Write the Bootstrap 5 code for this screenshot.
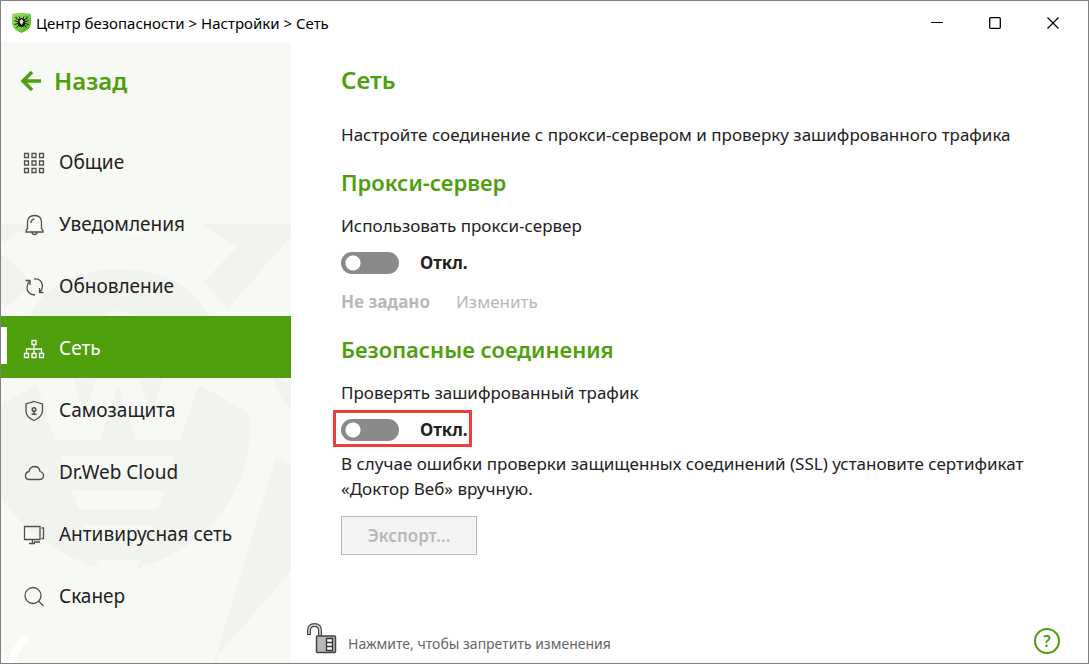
<!DOCTYPE html>
<html lang="ru">
<head>
<meta charset="utf-8">
<meta name="viewport" content="width=device-width, initial-scale=1">
<title>Центр безопасности</title>
<link rel="stylesheet" href="https://cdn.jsdelivr.net/npm/bootstrap@5.3.0/dist/css/bootstrap.min.css">
<style>
  :root { --brand: #4f9f0d; --ink: #222; --muted: #b8b8b8; }
  body { font-family: "Noto Sans", "Open Sans", sans-serif; font-size: 17px; line-height: 25px; color: var(--ink); background: #fff; }
  .app-window { border: 1px solid #808080; }
  .title-bar { height: 41px; padding: 2px 6px 0 10px; font-size: 15px; line-height: 20px; color: #000; }
  .title-bar a { color: inherit; }
  .win-btn { width: 58px; height: 39px; color: #000; }
  .win-btn svg, .side-link svg, .lock-btn svg, .title-bar svg { display: block; flex: none; }
  .side-panel { width: 290px; background: #f7f9f5; overflow: hidden; }
  .watermark { position: absolute; left: 0; top: 0; }
  .back-link { height: 88px; padding: 0 0 11px 20px; gap: 12px; font-size: 24px; font-weight: 600; color: var(--brand); }
  .side-link { height: 62px; padding: 3px 0 0 22px; gap: 14px; font-size: 19px; color: var(--ink); }
  .side-link:hover { color: var(--brand); }
  .side-link.active { background: var(--brand); color: #fff; }
  .side-link.active::before { content: ""; position: absolute; left: 0; top: 11px; width: 6px; height: 37px; background: #fff; }
  .side-link svg { stroke: #505050; fill: none; }
  .side-link.active svg { stroke: #fff; }
  .page-pane { padding: 22px 50px 9px 50px; }
  .page-title { font-size: 24px; line-height: 32px; font-weight: 600; color: var(--brand); margin: 0 0 26px; }
  .section-title { font-size: 22px; line-height: 30px; font-weight: 600; color: var(--brand); margin: 0 0 16px; }
  .lead-text { margin: 0 0 20px; }
  .switch-row { gap: 21px; height: 37px; margin: 6px 0 8px; font-weight: 700; }
  .switch-row .form-check-input { width: 58px; height: 22px; margin: 0; border: 0; border-radius: 11px; box-shadow: none; background-color: #8a8a8a;
    background-image: radial-gradient(circle at 12px 11px, #fff 7px, transparent 8px); background-position: 0 0; background-size: 100% 100%; }
  .switch-row .form-check-input:checked { background-color: var(--brand); background-image: radial-gradient(circle at 46px 11px, #fff 7px, transparent 8px); }
  .marked { width: 139px; margin: 5px 0 4px -8px; padding: 2px 0 0 5px; border: 3px solid #ee3e38; white-space: nowrap; }
  .proxy-state { gap: 26px; margin-bottom: 20px; color: var(--muted); }
  .proxy-state .btn { font-size: 17px; line-height: 25px; border: 0; }
  .proxy-state .btn:disabled { color: var(--muted); opacity: 1; }
  .cert-note { margin: 0 0 15px; }
  .export-btn { width: 136px; height: 39px; padding: 0; font-size: 17px; font-weight: 600; border-radius: 0; }
  .export-btn:disabled { color: var(--muted); background: #f4f4f4; border-color: #b8b8b8; opacity: 1; }
  .foot-bar { margin-left: -35px; margin-right: -22px; }
  .lock-btn { gap: 11px; font-size: 14px; line-height: 20px; color: #666; }
  .help-btn { width: 26px; height: 26px; border: 2px solid var(--brand); border-radius: 50%; color: var(--brand); font-size: 16px; line-height: 22px; font-weight: 600; }
</style>
</head>
<body>
<div class="app-window min-vh-100 d-flex flex-column">
  <header class="title-bar d-flex align-items-center justify-content-between">
    <div class="d-flex align-items-center gap-1">
      <svg width="21" height="22" viewBox="0 0 21 22">
        <defs><linearGradient id="shield" x1="0" y1="0" x2="1" y2="1"><stop offset="0" stop-color="#a2de62"/><stop offset=".5" stop-color="#77cf3f"/><stop offset="1" stop-color="#4fae12"/></linearGradient></defs>
        <path d="M1 2Q10.500 0 20 2V12Q19 18 10.500 21Q2 18 1 12Z" fill="url(#shield)"/>
        <path d="M8 8L5 6.500V4.500M7 10L3.500 8.500M7 11.500L3.500 12.500M8 13L5.500 15.500M13 8L16 6.500V4.500M14 10L17.500 8.500M14 11.500L17.500 12.500M13 13L15.500 15.500M9 6.500L8 4.500M12 6.500L13 4.500" fill="none" stroke="#111" stroke-width="1"/>
        <ellipse cx="10.500" cy="10.500" rx="3.500" ry="4.500" fill="#111"/>
        <path d="M8.500 9L10.500 7L12.500 9L12 11L10.500 13L9 11Z" fill="#d9eaca"/>
      </svg>
      <nav aria-label="Путь"><a class="text-decoration-none" href="#">Центр безопасности</a> &gt; <a class="text-decoration-none" href="#">Настройки</a> &gt; <span>Сеть</span></nav>
    </div>
    <div class="d-flex">
      <button type="button" class="win-btn btn p-0 border-0 d-flex align-items-center justify-content-center" aria-label="Свернуть"><svg width="12" height="12"><path d="M0 5.500H12" stroke="#000"/></svg></button>
      <button type="button" class="win-btn btn p-0 border-0 d-flex align-items-center justify-content-center" aria-label="Развернуть"><svg width="12" height="12"><rect x=".700" y=".700" width="10.600" height="10.600" rx="1" fill="none" stroke="#000" stroke-width="1.300"/></svg></button>
      <button type="button" class="win-btn btn p-0 border-0 d-flex align-items-center justify-content-center" aria-label="Закрыть"><svg width="12" height="12"><path d="M.500.500L11.500 11.500M11.500.500L.500 11.500" stroke="#000" stroke-width="1.200"/></svg></button>
    </div>
  </header>

  <div class="d-flex flex-grow-1">
    <aside class="side-panel position-relative flex-shrink-0">
      <svg class="watermark" width="290" height="621" viewBox="1 42 290 621" aria-hidden="true">
        <g fill="#f1f3ef">
          <path d="M200 224H291V236L228 309L203 282L237 247Z"/>
          <path d="M1 224H33L1 244Z"/>
          <path d="M1 253L33 283L6 309L1 303Z"/>
          <path d="M28 320Q50 269 119 269Q188 269 210 320L138 318L119 310L100 318Z"/>
          <path d="M1 404L37 385L55 440H180L199 385L249 413C256 470 226 541 139 568H100C56 556 18 524 1 497Z"/>
          <path d="M73 376H97L84 418ZM139 376H163L151 418Z"/>
          <path d="M100 440L118 386L136 440Z"/>
          <path d="M272 376L291 384V411Q280 400 272 376Z"/>
          <path d="M276 457L291 465V571L218 655V663H214Z"/>
        </g>
        <path d="M61 456H175L168 474H68ZM72 491H164L158 509H79ZM83 525H153L147 543H89ZM95 560H141L137 569H99Z" fill="#f7f9f5"/>
        <path d="M24 640Q13 650 13 664M0 656L6 664" stroke="#fff" stroke-width="7" stroke-linecap="round" fill="none"/>
      </svg>
      <div class="position-relative">
        <a class="back-link d-flex align-items-center text-decoration-none" href="#"><svg width="21" height="20"><path d="M20 10H3M11 1L2 10L11 19" fill="none" stroke="#4f9f0d" stroke-width="3.500"/></svg>Назад</a>
        <nav class="nav flex-column flex-nowrap">
          <a class="side-link nav-link position-relative d-flex align-items-center" href="#"><svg width="22" height="22"><path d="M1.500 1.500h4v4h-4zM9 1.500h4v4h-4zM16.500 1.500h4v4h-4zM1.500 9h4v4h-4zM9 9h4v4h-4zM16.500 9h4v4h-4zM1.500 16.500h4v4h-4zM9 16.500h4v4h-4zM16.500 16.500h4v4h-4z" stroke-width="1.300"/></svg>Общие</a>
          <a class="side-link nav-link position-relative d-flex align-items-center" href="#"><svg width="22" height="22"><path d="M4.500 14.500V8.500Q4.500 1.500 11.500 1.500Q18.500 1.500 18.500 8.500V14.500L20 16.500V18H3V16.500ZM9 18.500Q9 20.500 11.500 20.500Q14 20.500 14 18.500M8 9Q8 5.500 11.500 5" stroke-width="1.300"/></svg>Уведомления</a>
          <a class="side-link nav-link position-relative d-flex align-items-center" href="#"><svg width="22" height="22"><path d="M11 3Q19 2.500 19.500 10.500Q19.500 13.500 16.500 16.500M20.500 16.500H16.500V12M12 19Q4 18.500 4 11.500Q4 7.500 7 4.500M2.500 4.500H7V9" stroke-width="1.300"/></svg>Обновление</a>
          <a class="side-link nav-link active position-relative d-flex align-items-center" href="#" aria-current="page"><svg width="22" height="22"><path d="M9 2.500h4v4h-4zM1.500 15.500h4v4h-4zM9 15.500h4v4h-4zM16.500 15.500h4v4h-4zM11 6.500V15.500M3.500 15.500V11H18.500V15.500" stroke-width="1.300"/></svg>Сеть</a>
          <a class="side-link nav-link position-relative d-flex align-items-center" href="#"><svg width="22" height="22"><path d="M11 1.500L19.500 4V11Q19 17 11 20.500Q3 17 3 11V4Z" stroke-width="1.300"/><circle cx="11" cy="9.500" r="1.800" stroke-width="1.500"/><path d="M11 11V15M8.500 14.300H13.500" stroke-width="1.500"/></svg>Самозащита</a>
          <a class="side-link nav-link position-relative d-flex align-items-center" href="#"><svg width="22" height="22"><path d="M6 17.500Q2 17 2.500 13Q3 10 6 9.500Q7 4.500 12 4.500Q16.500 5 17 9.500Q20.500 10.500 20.500 13.500Q20.500 17 17 17.500Z" stroke-width="1.300"/></svg>Dr.Web Cloud</a>
          <a class="side-link nav-link position-relative d-flex align-items-center" href="#"><svg width="22" height="22"><path d="M1.500 2.500H17V15.500H1.500ZM9.500 15.500V19.500M6 19.500H12M11 18H17M18.500 4H20.500V14.500H18.500" stroke-width="1.300"/></svg>Антивирусная сеть</a>
          <a class="side-link nav-link position-relative d-flex align-items-center" href="#"><svg width="22" height="22"><circle cx="10" cy="9.500" r="8" stroke-width="1.300"/><path d="M15.500 15L20.500 20" stroke-width="1.300"/></svg>Сканер</a>
        </nav>
      </div>
    </aside>

    <main class="page-pane flex-grow-1 d-flex flex-column">
      <h1 class="page-title">Сеть</h1>
      <p class="lead-text">Настройте соединение с прокси-сервером и проверку зашифрованного трафика</p>

      <section>
        <h2 class="section-title">Прокси-сервер</h2>
        <label for="useProxy">Использовать прокси-сервер</label>
        <div class="switch-row form-switch d-flex align-items-center ps-0">
          <input class="form-check-input" type="checkbox" role="switch" id="useProxy"><span>Откл.</span>
        </div>
        <div class="proxy-state d-flex"><strong>Не задано</strong><button type="button" class="btn p-0" disabled>Изменить</button></div>
      </section>

      <section>
        <h2 class="section-title">Безопасные соединения</h2>
        <label for="checkTraffic">Проверять зашифрованный трафик</label>
        <div class="switch-row marked form-switch d-flex align-items-center">
          <input class="form-check-input flex-shrink-0" type="checkbox" role="switch" id="checkTraffic"><span>Откл.</span>
        </div>
        <p class="cert-note">В случае ошибки проверки защищенных соединений (SSL) установите сертификат «Доктор Веб» вручную.</p>
        <button type="button" class="export-btn btn" disabled>Экспорт...</button>
      </section>

      <footer class="foot-bar mt-auto d-flex align-items-end justify-content-between">
        <button type="button" class="lock-btn btn p-0 border-0 d-flex align-items-end">
          <svg width="31" height="32" viewBox="0 0 31 32"><path d="M3 13V8.500Q3 3 8.500 3Q14 3 14 8.500V14" fill="none" stroke="#444" stroke-width="4"/><path d="M3 12V8.500Q3 3 8.500 3Q14 3 14 8.500V14" fill="none" stroke="#ddd" stroke-width="1.500"/><rect x="10.500" y="14" width="19" height="16.500" rx="1" fill="#b8b8b8" stroke="#444" stroke-width="1.500"/><path d="M20.500 16.500h6v12h-6zM20.500 20.500h6M20.500 24.500h6" fill="#fff" stroke="#333" stroke-width="1.300"/></svg>
          <span>Нажмите, чтобы запретить изменения</span>
        </button>
        <button type="button" class="help-btn btn p-0" aria-label="Справка">?</button>
      </footer>
    </main>
  </div>
</div>
<script src="https://cdn.jsdelivr.net/npm/bootstrap@5.3.0/dist/js/bootstrap.bundle.min.js"></script>
</body>
</html>
